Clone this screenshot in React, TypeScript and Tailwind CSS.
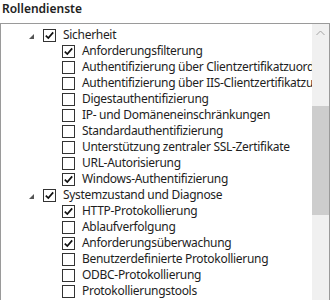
import React from 'react';

type Item = { label: string; checked: boolean };

const groups: { title: string; checked: boolean; items: Item[] }[] = [
  {
    title: 'Sicherheit',
    checked: true,
    items: [
      { label: 'Anforderungsfilterung', checked: true },
      { label: 'Authentifizierung über Clientzertifikatzuordnung', checked: false },
      { label: 'Authentifizierung über IIS-Clientzertifikatzuordnung', checked: false },
      { label: 'Digestauthentifizierung', checked: false },
      { label: 'IP- und Domäneneinschränkungen', checked: false },
      { label: 'Standardauthentifizierung', checked: false },
      { label: 'Unterstützung zentraler SSL-Zertifikate', checked: false },
      { label: 'URL-Autorisierung', checked: false },
      { label: 'Windows-Authentifizierung', checked: true },
    ],
  },
  {
    title: 'Systemzustand und Diagnose',
    checked: true,
    items: [
      { label: 'HTTP-Protokollierung', checked: true },
      { label: 'Ablaufverfolgung', checked: false },
      { label: 'Anforderungsüberwachung', checked: true },
      { label: 'Benutzerdefinierte Protokollierung', checked: false },
      { label: 'ODBC-Protokollierung', checked: false },
      { label: 'Protokollierungstools', checked: false },
    ],
  },
];

function CheckBox({ checked }: { checked: boolean }) {
  return (
    <div className="flex h-[13px] w-[13px] shrink-0 items-center justify-center border border-[#333333] bg-white">
      {checked && (
        <svg width="11" height="11" viewBox="0 0 11 11">
          <path d="M1.8 5.6 L4.3 8.1 L9.2 2.4" fill="none" stroke="#111" strokeWidth="1.7" />
        </svg>
      )}
    </div>
  );
}

function Expander() {
  return (
    <svg width="5" height="5" viewBox="0 0 5 5" className="mt-[3px] shrink-0">
      <polygon points="5,0 5,5 0,5" fill="#555" />
    </svg>
  );
}

export default function App() {
  return (
    <div className="h-[300px] w-[332px] overflow-hidden bg-white text-[12px] text-[#1e1e1e] [font-family:'Noto_Sans',sans-serif]">
      <div className="h-[23px] pl-[2px] pt-[1px] font-semibold leading-[16px] text-[#222]">Rollendienste</div>
      <div className="flex h-[277px] w-[330px] border-l border-t border-r border-[#9a9a9a]">
        <div className="flex-1 overflow-hidden pt-[3px] tracking-[-0.3px]">
          {groups.map((g) => (
            <div key={g.title}>
              <div className="flex h-[16px] items-center whitespace-nowrap pl-[28px]">
                <Expander />
                <div className="ml-[9px]">
                  <CheckBox checked={g.checked} />
                </div>
                <span className="ml-[7px]">{g.title}</span>
              </div>
              {g.items.map((it) => (
                <div key={it.label} className="flex h-[16px] items-center whitespace-nowrap pl-[61px]">
                  <CheckBox checked={it.checked} />
                  <span className="ml-[7px]">{it.label}</span>
                </div>
              ))}
            </div>
          ))}
        </div>
        <div className="flex w-[17px] shrink-0 flex-col bg-[#f0f0f0]">
          <div className="flex h-[17px] items-center justify-center">
            <svg width="9" height="6" viewBox="0 0 9 6">
              <path d="M0.5 5 L4.5 1 L8.5 5" fill="none" stroke="#a3a3a3" strokeWidth="1" />
            </svg>
          </div>
          <div className="mt-[65px] h-[109px] w-[17px] bg-[#cdcdcd]" />
        </div>
      </div>
    </div>
  );
}
